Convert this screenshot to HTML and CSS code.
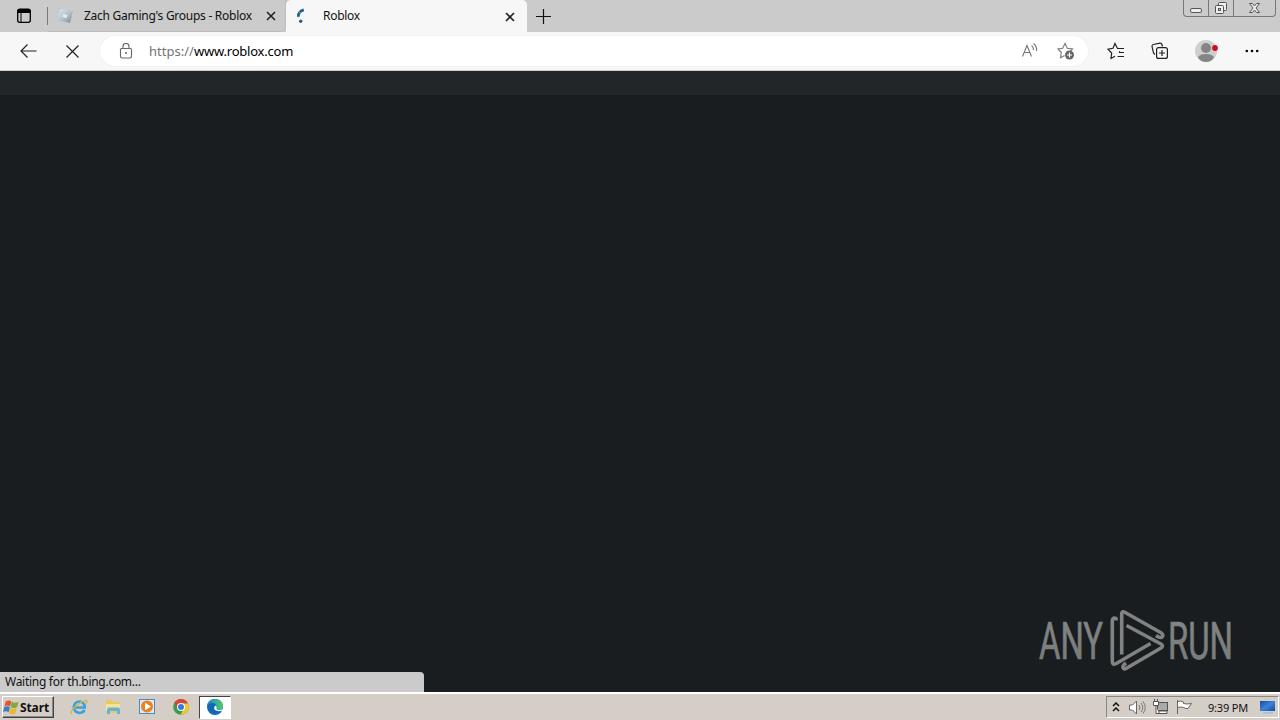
FILE: index.html
```html
<!DOCTYPE html>
<html lang="en">
<head>
<meta charset="utf-8">
<title>Roblox</title>
<link rel="stylesheet" href="styles.css">
</head>
<body>
<div class="screen">
  <header class="tabstrip">
    <div class="tab-menu"><svg width="16" height="16" viewBox="0 0 16 16"><rect x="1.7" y="1.7" width="12.6" height="12.6" rx="2" fill="none" stroke="#000" stroke-width="1.3"/><path d="M1.5 4.5V3q0-2 2-2h9q2 0 2 2v1.5zM5 4v10.500" stroke="#000" stroke-width="1"/></svg></div>
    <div class="tab">
      <svg class="favicon" width="17" height="16" viewBox="0 0 17 16"><defs><linearGradient id="rb" x1="0" y1="0" x2="1" y2="1"><stop stop-color="#e4eaf0"/><stop offset=".55" stop-color="#b3bfca"/><stop offset="1" stop-color="#71879b"/></linearGradient></defs><path d="M3.500 1L16 3l-3 12L0 12z" fill="url(#rb)"/><path d="M6.500 6l4 1-1 3-4-1z" fill="#e4eaf0"/></svg>
      <span class="tab-title first-title">Zach Gaming's Groups - Roblox</span>
      <svg class="close" width="10" height="10" viewBox="0 0 10 10"><path d="M1 1l8 8M9 1L1 9"/></svg>
    </div>
    <div class="tab active">
      <svg class="spinner" width="17" height="16" viewBox="0 0 17 16"><path d="M8.800 1.900Q3 3.500 3.300 9.300" fill="none" stroke="#24628f" stroke-width="2.800" stroke-dasharray="4.500 .4"/><circle cx="5.700" cy="13.300" r="1.700" fill="#24628f"/></svg>
      <span class="tab-title second-title">Roblox</span>
      <svg class="close" width="10" height="10" viewBox="0 0 10 10"><path d="M1 1l8 8M9 1L1 9"/></svg>
    </div>
    <svg class="new-tab" width="15" height="15" viewBox="0 0 15 15"><path d="M7.500 0v15M0 7.500h15" stroke="#111" stroke-width="1.200"/></svg>
    <div class="window-buttons">
      <span class="wb"><svg width="24" height="16" viewBox="0 0 24 16"><rect x="6.500" y="8.500" width="11" height="4" rx="1.500" fill="#eee" stroke="#555"/></svg></span>
      <span class="wb"><svg width="24" height="16" viewBox="0 0 24 16"><rect x="9.500" y="2.500" width="8" height="8" rx="1" fill="#eee" stroke="#555"/><rect x="6.500" y="5.500" width="8" height="8" rx="1" fill="#eee" stroke="#555"/><rect x="9.500" y="8.500" width="2" height="2" fill="#ccc" stroke="#555"/></svg></span>
      <span class="wb wide"><svg width="41" height="16" viewBox="0 0 41 16"><path d="M15.500 3.500h3l2 2.500 2-2.500h3l-3.500 4.500 3.500 4.500h-3l-2-2.500-2 2.500h-3L19 8z" fill="#eee" stroke="#555"/></svg></span>
    </div>
  </header>
  <nav class="toolbar">
    <svg class="back" width="17" height="14" viewBox="0 0 17 14"><path d="M16.500 7H1M7.500.5L1 7l6.500 6.500" fill="none" stroke="#222" stroke-width="1.200"/></svg>
    <svg class="stop" width="13" height="13" viewBox="0 0 13 13"><path d="M.5.5l12 12M12.500.5l-12 12" stroke="#222" stroke-width="1.200"/></svg>
    <div class="address">
      <svg class="lock" width="14" height="16" viewBox="0 0 14 16"><path d="M4 5V3.500a3 3 0 016 0V5M2.500 5.500h9q1 0 1 1v7q0 1.500-1.500 1.500H3q-1.500 0-1.500-1.500v-7q0-1 1-1z" fill="none" stroke="#666" stroke-width="1.100"/><circle cx="7" cy="10" r="1" fill="#666"/></svg>
      <span class="url"><span class="scheme">https://</span><span class="host">www.roblox.com</span></span>
      <svg class="read" width="18" height="16" viewBox="0 0 18 16"><path d="M1.500 13.500L6 2.500l4.500 11M3 9.500h6M10.500 2.500q2.200 1.500 2 4.500M12.500.5q3.500 2.500 3 7.500" fill="none" stroke="#777" stroke-width="1.100"/></svg>
      <svg class="fav-add" width="18" height="18" viewBox="0 0 18 18"><path d="M7.500 13.500l-4 2.200.8-5.200L1 7l4.700-.7L8 1.500l2.300 4.800 5.200.7-2 2" fill="none" stroke="#777" stroke-width="1.100"/><circle cx="12.500" cy="13" r="4.500" fill="#666"/><path d="M12.500 10.500v5M10 13h5" stroke="#fff" stroke-width="1.100"/></svg>
    </div>
    <svg class="favorites" width="18" height="18" viewBox="0 0 18 18"><path d="M11 6.500h6M12 10.500h5M10.500 14.500h6.500M11 6.500h-.5L8 1.500 6 6.300l-5 .8L4.700 11 4 16.500l4-2.200M12 10.500l1-1" fill="none" stroke="#222" stroke-width="1.200"/></svg>
    <svg class="collections" width="18" height="18" viewBox="0 0 18 18"><path d="M4 12.500L2.500 11 1 4.500Q.800 3 2.300 2.500L9 1.200q1.500-.200 2 1.300l.5 2" fill="none" stroke="#222" stroke-width="1.200"/><rect x="5.600" y="5.600" width="10.800" height="10.800" rx="2" fill="#f7f7f7" stroke="#222" stroke-width="1.200"/><path d="M11 8v6M8 11h6" stroke="#222" stroke-width="1.200"/></svg>
    <svg class="avatar" width="24" height="22" viewBox="0 0 24 22"><circle cx="11" cy="11" r="11" fill="#cfcfcf"/><circle cx="11" cy="8" r="5" fill="#858585"/><path d="M3 17.500q1-3.500 8-3.500t8 3.500q-3 4.500-8 4.500t-8-4.500" fill="#858585"/><circle cx="20" cy="8" r="2.900" fill="#d40b20"/></svg>
    <svg class="more" width="14" height="4" viewBox="0 0 14 4"><circle cx="1.800" cy="2" r="1.300"/><circle cx="7" cy="2" r="1.300"/><circle cx="12.200" cy="2" r="1.300"/></svg>
  </nav>
  <main class="page">
    <div class="site-bar"></div>
    <div class="status">Waiting for th.bing.com...</div>
    <svg class="watermark" width="204" height="70" viewBox="0 0 204 70">
      <defs><linearGradient id="wm" x1="0" y1="0" x2="0" y2="1"><stop offset="0" stop-color="#858889"/><stop offset="1" stop-color="#777977"/></linearGradient></defs>
      <text x="2" y="50" textLength="64" lengthAdjust="spacingAndGlyphs">ANY</text>
      <text x="131" y="50" textLength="65" lengthAdjust="spacingAndGlyphs">RUN</text>
      <g fill="none" stroke="#818383" stroke-width="3.600" stroke-linejoin="round" stroke-linecap="butt">
        <path d="M84.700 45.500V5q0-3.500 3.500-1.500L124.500 24q2.500 2.500.5 4t-6-1.500"/>
        <path d="M79 11.500V9.500Q75.300 8 75.300 12v40q0 4.500 4 2.500L113.500 34.500"/>
        <path d="M89.500 16.500L124 35q3 2 0 4L89 59.500q-2.500 1-3-1t3-4.500"/>
      </g>
    </svg>
  </main>
  <footer class="taskbar">
    <div class="start"><svg width="17" height="16" viewBox="0 0 18 16"><path d="M3 2q3-2 6 0L7.500 7.500q-3-2-6 0z" fill="#e65428"/><path d="M9.500 2.500q3 2 7 0L15 8q-3.500 2-7 0z" fill="#75ae3b"/><path d="M1.300 8.200q3-2 6 0L6 13.500q-3-2-6 0z" fill="#397ec5"/><path d="M8 8.800q3 2 6.500 0L13 14.500q-3.500 2-6.500 0z" fill="#edb62c"/></svg><span>Start</span></div>
    <div class="task ie"><svg width="18" height="18" viewBox="0 0 18 18"><path d="M14.500 12A5.700 5.700 0 119.500 3.500q5 .5 5.200 6H5" fill="none" stroke="#3aa1dc" stroke-width="2.700"/><path d="M1.500 16q-2-3 6-9 8-6 9.500-4 .5 1-1 3" fill="none" stroke="#d8b646" stroke-width="1.400"/></svg></div>
    <div class="task"><svg width="18" height="18" viewBox="0 0 18 18"><path d="M2 2h6l1 2h7v11H2z" fill="#e7c95f"/><path d="M2 6h14v7H2z" fill="#f3e399"/><path d="M4 9.500h10q2 0 2 2V16h-3v-3H6v3H3v-4z" fill="#68b3d5"/></svg></div>
    <div class="task"><svg width="18" height="18" viewBox="0 0 18 18"><rect x="1.500" y="1.500" width="15" height="14" fill="#d9eafa" stroke="#5489bd"/><circle cx="9" cy="8.500" r="6" fill="#e98220"/><path d="M7 4.800v7.400l6-3.700z" fill="#fff"/></svg></div>
    <div class="task"><svg width="18" height="18" viewBox="0 0 18 18"><circle cx="9" cy="9" r="7.800" fill="#3a9c4d"/><path d="M2.200 5A7.800 7.800 0 0116 5.500H9L5.500 10z" fill="#dd4334"/><path d="M16 5.500A7.800 7.800 0 018.500 16.800l4-7L10 5.500z" fill="#f5c52c"/><circle cx="9" cy="9" r="4" fill="#fff"/><circle cx="9" cy="9" r="3" fill="#3978dc"/></svg></div>
    <div class="task current"><svg width="18" height="18" viewBox="0 0 18 18"><defs><linearGradient id="ed"><stop stop-color="#168bd3"/><stop offset="1" stop-color="#55c866"/></linearGradient></defs><circle cx="9" cy="9" r="8" fill="#1267b4"/><path d="M1 9Q1.500 1 9 1t8 7q0 4-5 4-3 0-2-2 1-5-4-5-4 0-5 4" fill="url(#ed)"/><path d="M9 7.500q-1.500 3 0 4.500 3 2 7.500.5v3l2-3V9.500q-1.500 2.500-5 2.500-3.500 0-3-2 .5-1.500-1.500-2.500" fill="#fff"/></svg></div>
    <div class="tray">
      <svg width="8" height="10" viewBox="0 0 8 10"><path d="M1 4l3-3 3 3M1 9l3-3 3 3" fill="none" stroke="#111" stroke-width="1.500"/></svg>
      <svg class="volume" width="17" height="15" viewBox="0 0 17 15"><path d="M.5 5h3l4-4v13l-4-4h-3z" fill="#fff" stroke="#666"/><path d="M10 5q2 2.500 0 5M12 3q3.500 4.500 0 9M14 1.500q4.500 6 0 12" fill="none" stroke="#777"/></svg>
      <svg class="network" width="18" height="16" viewBox="0 0 18 16"><rect x="5.500" y="3.500" width="10" height="8" fill="#aaa" stroke="#555"/><path d="M5 14.500h10V12H7v2.500M1.500 2.500h5v4h-5zM2.500 0v3M5.500 0v3M4 7v7.500h3" fill="#fff" stroke="#555"/></svg>
      <svg class="flag" width="17" height="16" viewBox="0 0 17 16"><path d="M1.500 1v14M1.500 2.500q3-1 6 .5v1.500q3 1 8 0l-3.500 5q-2 .5-4.500-1-3-1-6 0" fill="#fff" stroke="#666"/></svg>
      <span class="clock">9:39 PM</span>
      <svg class="desktop" width="17" height="14" viewBox="0 0 17 14"><defs><linearGradient id="ds" x1="0" y1="0" x2="1" y2="1"><stop stop-color="#1549a0"/><stop offset=".5" stop-color="#3b83d9"/><stop offset="1" stop-color="#134b9f"/></linearGradient></defs><path d="M1 1h15v10H1z" fill="url(#ds)"/><path d="M4 12h10v1.500H4z" fill="#a1bfdf"/></svg>
    </div>
  </footer>
</div>
</body>
</html>
```

FILE: styles.css
```css
* { box-sizing: border-box; }
body { margin: 0; font: 12px "Noto Sans", sans-serif; color: #111; }
svg { display: block; flex: none; }
.screen { width: 1280px; height: 720px; display: flex; flex-direction: column; overflow: hidden; }
.tabstrip { height: 32px; background: #cbcbcb; display: flex; align-items: center; flex: none; }
.tab-menu { width: 48px; height: 18px; padding: 1px 0 0 16px; border-right: 1px solid #777; }
.tab { height: 32px; width: 238px; display: flex; align-items: center; padding-left: 10px; border-right: 1px solid #bdbdbd; border-bottom: 1px solid #bababa; border-radius: 0 0 5px 0; }
.tab.active { width: 241px; background: #f7f7f7; border: 0; border-radius: 5px 5px 0 0; padding-left: 9px; }
.favicon { margin-left: -1px; }
.tab-title { line-height: 18px; white-space: nowrap; letter-spacing: -.27px; }
.first-title { margin-left: 10px; width: 183px; padding-top: 1px; }
.second-title { margin-left: 11px; width: 183px; }
.close { stroke: #222; stroke-width: 1.6; margin-top: 1px; margin-left: -1px; }
.new-tab { margin-left: 9px; }
.window-buttons { align-self: flex-start; display: flex; width: 93px; height: 17px; margin: 0 4px 0 auto; border: 1px solid #777; border-top: 0; border-radius: 0 0 4px 4px; overflow: hidden; }
.wb { width: 25px; border-right: 1px solid #777; }
.wb.wide { width: 41px; border: 0; }
.toolbar { height: 39px; flex: none; display: flex; align-items: center; background: #f7f7f7; border-bottom: 1px solid #cfcfcf; padding-left: 20px; }
.stop { margin-left: 29px; }
.address { display: flex; align-items: center; width: 988px; height: 30px; margin-left: 21px; padding-left: 19px; background: #fff; border-radius: 15px; box-shadow: 0 0 0 1px #f1f1f1; }
.url { width: 872px; margin-left: 16px; display: flex; font-size: 13px; line-height: 18px; }
.scheme { width: 45px; color: #737373; }
.host { color: #000; letter-spacing: -.22px; }
.fav-add { margin-left: 18px; }
.favorites { margin-left: 19px; }
.collections { margin-left: 26px; }
.avatar { margin-left: 26px; }
.more { margin-left: 26px; }
.page { flex: 1; position: relative; background: #191d1f; }
.site-bar { height: 24px; background: #232628; }
.status { position: absolute; left: 0; bottom: 0; width: 424px; height: 20px; padding-left: 5px; line-height: 20px; letter-spacing: -.28px; background: #cbcbcb; border-radius: 0 4px 0 0; }
.watermark { position: absolute; left: 1037px; top: 538px; }
.watermark text { font: 400 51px Roboto, sans-serif; fill: url(#wm); stroke: #7e8080; stroke-width: .7px; }
.taskbar { height: 28px; flex: none; display: flex; align-items: center; background: #d5cec7; border-top: 2px solid #fff; padding: 0 1px 0 2px; }
.start { width: 52px; height: 22px; display: flex; align-items: center; border: 1px solid; border-color: #fff #444 #444 #fff; box-shadow: inset -1px -1px #888; font: 700 12px "Noto Sans", sans-serif; letter-spacing: -.1px; }
.task { width: 34px; height: 23px; display: flex; align-items: center; justify-content: center; }
.ie { margin-left: 8px; }
.task.current { width: 32px; margin-left: 1px; background: #fff; border: 1px solid; border-color: #444 #fff #fff #444; }
.tray { margin-left: auto; width: 173px; height: 22px; display: flex; align-items: center; padding-left: 5px; border: 1px solid; border-color: #888 #fff #fff #888; }
.volume { margin-left: 9px; }
.network { margin-left: 6px; }
.flag { margin-left: 6px; }
.clock { width: 40px; margin-left: 15px; font-size: 11px; letter-spacing: -.2px; white-space: nowrap; }
.desktop { margin-left: 11px; }
```
